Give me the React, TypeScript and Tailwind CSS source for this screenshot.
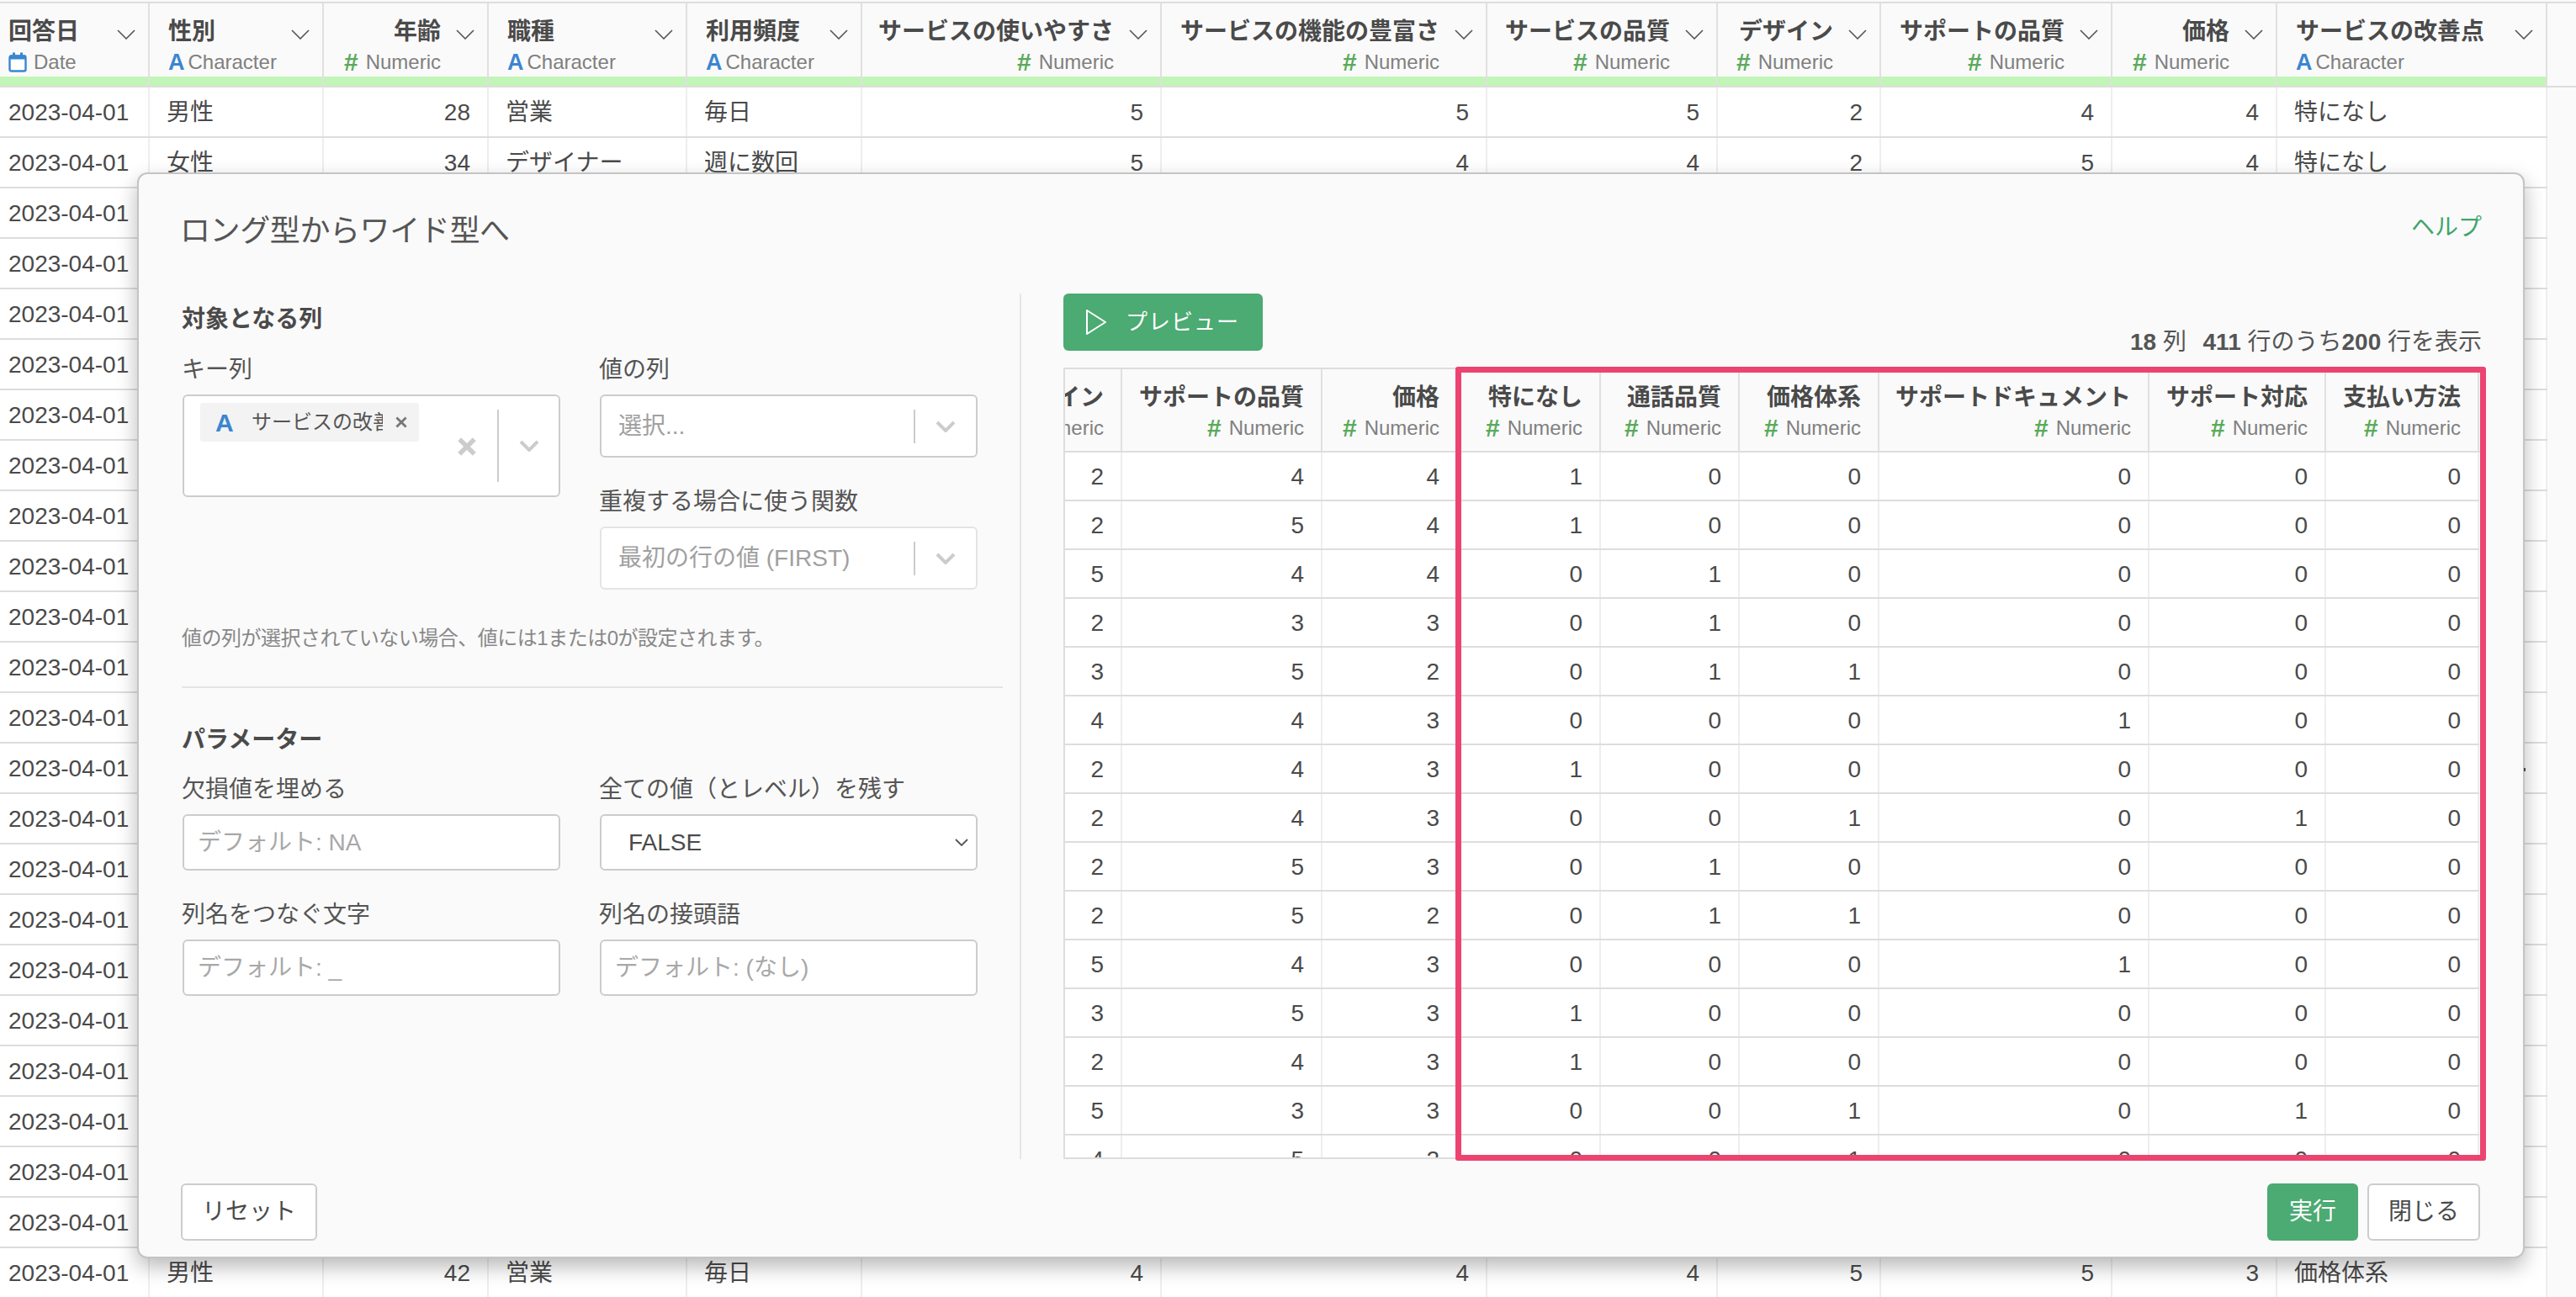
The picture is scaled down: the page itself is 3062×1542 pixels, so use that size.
import React from "react";

const colW = [178, 207, 196, 236, 208, 356, 387, 274, 194, 275, 196, 321];
type H = { t: string; k: "D" | "C" | "N"; r?: boolean };
const heads: H[] = [
  { t: "回答日", k: "D" },
  { t: "性別", k: "C" },
  { t: "年齢", k: "N" },
  { t: "職種", k: "C" },
  { t: "利用頻度", k: "C" },
  { t: "サービスの使いやすさ", k: "N" },
  { t: "サービスの機能の豊富さ", k: "N" },
  { t: "サービスの品質", k: "N" },
  { t: "デザイン", k: "N" },
  { t: "サポートの品質", k: "N" },
  { t: "価格", k: "N" },
  { t: "サービスの改善点", k: "C" },
];
const first = ["2023-04-01", "男性", "28", "営業", "毎日", "5", "5", "5", "2", "4", "4", "特になし"];
const second = ["2023-04-01", "女性", "34", "デザイナー", "週に数回", "5", "4", "4", "2", "5", "4", "特になし"];
const last = ["2023-04-01", "男性", "42", "営業", "毎日", "4", "4", "4", "5", "5", "3", "価格体系"];
const blank = ["2023-04-01", "", "", "", "", "", "", "", "", "", "", ""];

const pvW = [70, 238, 161, 170, 165, 166, 321, 210, 182];
const pvH = ["デザイン", "サポートの品質", "価格", "特になし", "通話品質", "価格体系", "サポートドキュメント", "サポート対応", "支払い方法"];
const pv = [
  [2, 4, 4, 1, 0, 0, 0, 0, 0],
  [2, 5, 4, 1, 0, 0, 0, 0, 0],
  [5, 4, 4, 0, 1, 0, 0, 0, 0],
  [2, 3, 3, 0, 1, 0, 0, 0, 0],
  [3, 5, 2, 0, 1, 1, 0, 0, 0],
  [4, 4, 3, 0, 0, 0, 1, 0, 0],
  [2, 4, 3, 1, 0, 0, 0, 0, 0],
  [2, 4, 3, 0, 0, 1, 0, 1, 0],
  [2, 5, 3, 0, 1, 0, 0, 0, 0],
  [2, 5, 2, 0, 1, 1, 0, 0, 0],
  [5, 4, 3, 0, 0, 0, 1, 0, 0],
  [3, 5, 3, 1, 0, 0, 0, 0, 0],
  [2, 4, 3, 1, 0, 0, 0, 0, 0],
  [5, 3, 3, 0, 0, 1, 0, 1, 0],
  [4, 5, 2, 0, 0, 1, 0, 0, 0],
];

function Chevron() {
  return (
    <svg width="22" height="12" viewBox="0 0 22 12" className="shrink-0">
      <polyline points="1,1 11,11 21,1" fill="none" stroke="#555" strokeWidth="1.6" />
    </svg>
  );
}
function BoldChevron() {
  return (
    <svg width="24" height="14" viewBox="0 0 24 14">
      <polyline points="2,2 12,12 22,2" fill="none" stroke="#cccccc" strokeWidth="4" />
    </svg>
  );
}
function Cross({ size, color, w }: { size: number; color: string; w: number }) {
  return (
    <svg width={size} height={size} viewBox="0 0 20 20">
      <path d="M2 2L18 18M18 2L2 18" stroke={color} strokeWidth={w} fill="none" />
    </svg>
  );
}
function Calendar() {
  return (
    <svg width="22" height="24" viewBox="0 0 22 24" className="shrink-0">
      <rect x="1.5" y="4.5" width="19" height="18" rx="2" fill="#fff" stroke="#3a86d0" strokeWidth="2.4" />
      <rect x="1.5" y="3.5" width="19" height="5" fill="#3a86d0" />
      <rect x="5" y="0.5" width="3" height="5" fill="#3a86d0" />
      <rect x="14" y="0.5" width="3" height="5" fill="#3a86d0" />
    </svg>
  );
}
function Meta({ k }: { k: "D" | "C" | "N" }) {
  if (k === "D")
    return (
      <span className="flex items-center gap-[8px]">
        <Calendar />
        <span>Date</span>
      </span>
    );
  if (k === "C")
    return (
      <span className="flex items-center gap-[4px]">
        <span className="font-bold text-[27px] text-[#3a86d0]">A</span>
        <span>Character</span>
      </span>
    );
  return (
    <span className="flex items-center gap-[9px]">
      <span className="font-bold text-[30px] text-[#5aaa5a]">#</span>
      <span>Numeric</span>
    </span>
  );
}

function BgTable() {
  const rows = Array.from({ length: 24 }, (_, i) => (i === 0 ? first : i === 1 ? second : i === 23 ? last : blank));
  return (
    <div className="w-[3062px] pt-[2px]">
      <div className="h-[102px] border-t-2 border-b-2 border-[#dddddd] flex">
        <div className="flex">
          {heads.map((h, i) => {
            const num = h.k === "N";
            return (
              <div key={i} style={{ width: colW[i] }} className="h-full border-r-2 border-[#e0e0e0] flex flex-col">
                <div className={`relative flex-1 flex flex-col ${i === 0 ? "pl-[10px]" : "pl-[22px]"} pr-[55px] pt-[15px] ${num ? "items-end" : "items-start"}`}>
                  <div className="text-[28px] leading-[38px] font-bold text-[#4a4a4a] whitespace-nowrap">{h.t}</div>
                  <div className="text-[24px] leading-[34px] text-[#808080] whitespace-nowrap">
                    <Meta k={h.k} />
                  </div>
                  <div className="absolute right-[15px] top-[31px]">
                    <Chevron />
                  </div>
                </div>
                <div className="h-[12px] bg-[#c2f5b8]" />
              </div>
            );
          })}
        </div>
      </div>
      {rows.map((r, ri) => (
        <div key={ri} className="flex h-[60px]">
          <div className="flex border-b-2 border-[#dddddd] bg-white">
            {r.map((c, i) => (
              <div
                key={i}
                style={{ width: colW[i] }}
                className={`h-full border-r-2 border-[#eeeeee] text-[28px] leading-[60px] text-[#4a4a4a] whitespace-nowrap ${i === 0 ? "pl-[10px]" : "px-[20px]"} ${heads[i].k === "N" ? "text-right" : "text-left"}`}
              >
                {c}
              </div>
            ))}
          </div>
        </div>
      ))}
    </div>
  );
}

function Label({ children }: { children: React.ReactNode }) {
  return <div className="h-[40px] pt-[2px] leading-[40px] mb-[11px] -ml-px text-[28px] text-[#555] whitespace-nowrap">{children}</div>;
}
function SelectBox({ text, disabled }: { text: string; disabled?: boolean }) {
  return (
    <div className={`h-[75px] w-[449px] rounded-[6px] border-2 bg-white flex items-center ${disabled ? "border-[#e4e4e4]" : "border-[#cccccc]"}`}>
      <div className="flex-1 pl-[20px] text-[28px] text-[#a0a0a0]">{text}</div>
      <div className="h-[40px] w-[2px] bg-[#cccccc]" />
      <div className="w-[72px] flex items-center justify-center">
        <BoldChevron />
      </div>
    </div>
  );
}
function InputBox({ text }: { text: string }) {
  return (
    <div className="h-[67px] w-[449px] rounded-[6px] border-2 border-[#cccccc] bg-white flex items-center pl-[16px] text-[28px] text-[#a8a8a8]">
      {text}
    </div>
  );
}

function Left() {
  return (
    <div className="w-[998px] h-full border-r-2 border-[#e5e5e5] pr-[20px] pt-[4px] shrink-0">
      <div className="leading-[54px] text-[28px] font-bold text-[#4a4a4a]">対象となる列</div>
      <div className="mt-[11px] flex gap-[47px] pl-[1px]">
        <div className="w-[449px]">
          <Label>キー列</Label>
          <div className="h-[122px] rounded-[6px] border-2 border-[#cccccc] bg-white flex items-center">
            <div className="w-[372px] h-full pt-[8px] pl-[19px] relative">
              <div className="w-[260px] h-[46px] bg-[#f3f3f3] rounded-[3px] flex items-center pl-[18px]">
                <span className="font-bold text-[30px] text-[#3a86d0] w-[25px]">A</span>
                <span className="ml-[18px] w-[156px] overflow-hidden whitespace-nowrap text-[24px] text-[#555]">サービスの改善点</span>
                <span className="ml-[15px] flex">
                  <Cross size={14} color="#777" w={4} />
                </span>
              </div>
              <div className="absolute left-[325px] top-[49px]">
                <Cross size={22} color="#cccccc" w={5} />
              </div>
            </div>
            <div className="h-[86px] w-[2px] bg-[#cccccc]" />
            <div className="flex-1 flex justify-center">
              <BoldChevron />
            </div>
          </div>
        </div>
        <div className="w-[449px]">
          <Label>値の列</Label>
          <SelectBox text="選択..." />
          <div className="mt-[31px]">
            <Label>重複する場合に使う関数</Label>
            <SelectBox text="最初の行の値 (FIRST)" disabled />
          </div>
        </div>
      </div>
      <div className="mt-[38px] leading-[40px] text-[24px] text-[#888] tracking-[-0.5px] whitespace-nowrap">値の列が選択されていない場合、値には1または0が設定されます。</div>
      <div className="mt-[37px] h-[2px] bg-[#e5e5e5]" />
      <div className="mt-[35px] leading-[54px] text-[28px] font-bold text-[#4a4a4a]">パラメーター</div>
      <div className="mt-[10px] pl-[1px] grid grid-cols-[449px_449px] gap-x-[47px] gap-y-[31px]">
        <div>
          <Label>欠損値を埋める</Label>
          <InputBox text="デフォルト: NA" />
        </div>
        <div>
          <Label>全ての値（とレベル）を残す</Label>
          <div className="h-[67px] w-[449px] rounded-[6px] border-2 border-[#cccccc] bg-white flex items-center justify-between pl-[32px] pr-[9px] text-[28px] text-[#4a4a4a]">
            <span>FALSE</span>
            <svg width="16" height="10" viewBox="0 0 16 10">
              <polyline points="1,1 8,8 15,1" fill="none" stroke="#555" strokeWidth="1.8" />
            </svg>
          </div>
        </div>
        <div>
          <Label>列名をつなぐ文字</Label>
          <InputBox text="デフォルト: _" />
        </div>
        <div>
          <Label>列名の接頭語</Label>
          <InputBox text="デフォルト: (なし)" />
        </div>
      </div>
    </div>
  );
}

function Preview() {
  return (
    <div className="relative w-[1686px] h-[941px] border-t-2 border-b-2 border-l-2 border-[#dddddd] overflow-hidden bg-white flex flex-col">
      <div className="flex h-[99px] shrink-0 bg-[#fafafa] border-b-2 border-[#dddddd]">
        {pvH.map((t, i) => (
          <div
            key={i}
            style={{ width: pvW[i] - (i === 0 ? 2 : 0) }}
            className="h-full shrink-0 border-r-2 border-[#e0e0e0] overflow-hidden flex flex-col items-end pr-[20px] pt-[15px]"
          >
            <div className="text-[28px] leading-[38px] font-bold text-[#4a4a4a] whitespace-nowrap">{t}</div>
            <div className="text-[24px] leading-[34px] text-[#808080] whitespace-nowrap">
              <Meta k="N" />
            </div>
          </div>
        ))}
      </div>
      {pv.map((r, ri) => (
        <div key={ri} className="flex h-[58px] shrink-0">
          <div className="flex border-b-2 border-[#dddddd]">
            {r.map((v, i) => (
              <div
                key={i}
                style={{ width: pvW[i] - (i === 0 ? 2 : 0) }}
                className="h-full shrink-0 border-r-2 border-[#eeeeee] pr-[20px] text-right text-[28px] leading-[58px] text-[#4a4a4a]"
              >
                {v}
              </div>
            ))}
          </div>
        </div>
      ))}
    </div>
  );
}

export default function App() {
  return (
    <div
      className="relative w-[3062px] h-[1542px] overflow-hidden bg-[#fafafa]"
      style={{ fontFamily: '"Liberation Sans","Noto Sans CJK JP",sans-serif' }}
    >
      <BgTable />
      <div className="absolute left-[163px] top-[205px] w-[2838px] h-[1291px] rounded-[12px] border-2 border-[#c4c4c4] bg-[#fafafa] shadow-[0_10px_24px_rgba(0,0,0,0.28)] flex flex-col">
        <div className="h-[142px] flex items-start justify-between pl-[49px] pr-[49px] pt-[46px] shrink-0">
          <div className="text-[36px] leading-[44px] tracking-[-0.4px] text-[#555]">ロング型からワイド型へ</div>
          <div className="text-[28px] leading-[36px] text-[#3da56c]">ヘルプ</div>
        </div>
        <div className="h-[1029px] flex pl-[51px] shrink-0">
          <Left />
          <div className="ml-[50px] w-[1686px] relative">
            <div className="h-[88px] flex items-start justify-between">
              <div className="h-[68px] w-[237px] rounded-[6px] bg-[#4caa73] flex items-center pl-[26px] text-white text-[26px]">
                <svg width="26" height="32" viewBox="0 0 26 32" className="shrink-0">
                  <path d="M2 2L24 16L2 30Z" fill="none" stroke="#fff" strokeWidth="2" strokeLinejoin="round" />
                </svg>
                <span className="ml-[22px] tracking-[1px]">プレビュー</span>
              </div>
              <div className="mt-[38px] leading-[40px] text-[28px] text-[#555] whitespace-pre">
                <b>18</b> 列{"  "}<b className="ml-[4px]">411</b> 行のうち<b>200</b> 行を表示
              </div>
            </div>
            <Preview />
            <div className="absolute left-[466px] top-[87px] w-[1225px] h-[944px] border-[7px] border-[#ec4470] rounded-[3px]" />
          </div>
        </div>
        <div className="flex-1 flex items-start justify-between pl-[50px] pr-[51px] pt-[29px]">
          <div className="h-[68px] w-[162px] rounded-[6px] border-2 border-[#cccccc] bg-white flex items-center justify-center text-[28px] text-[#4a4a4a]">リセット</div>
          <div className="flex gap-[11px]">
            <div className="h-[68px] w-[108px] rounded-[6px] bg-[#4caa73] flex items-center justify-center text-[28px] text-white">実行</div>
            <div className="h-[68px] w-[134px] rounded-[6px] border-2 border-[#cccccc] bg-white flex items-center justify-center text-[28px] text-[#4a4a4a]">閉じる</div>
          </div>
        </div>
      </div>
      <div className="absolute left-[3000px] top-[913px] w-[2px] h-[4px] bg-[#444444]" />
    </div>
  );
}
